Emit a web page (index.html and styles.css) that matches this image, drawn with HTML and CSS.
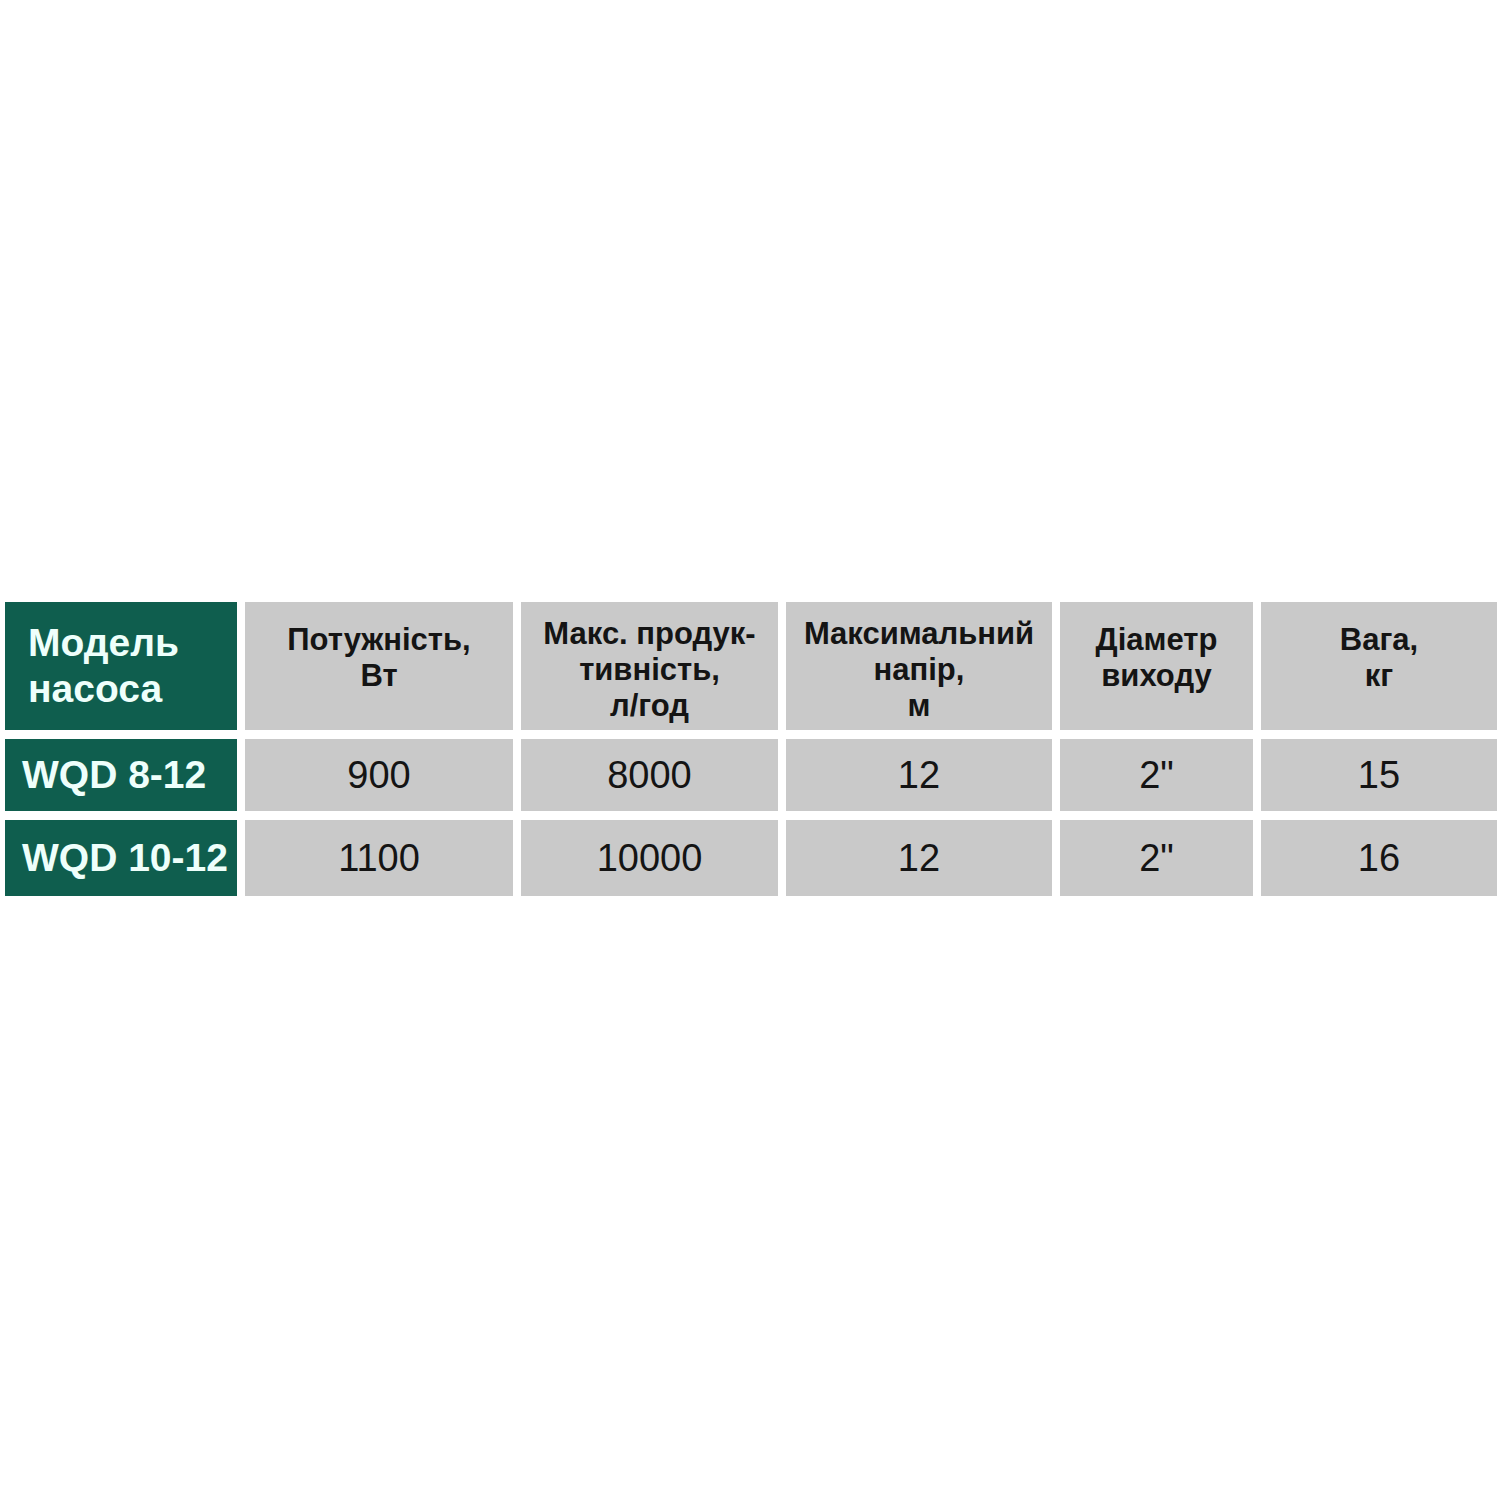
FILE: index.html
```html
<!DOCTYPE html>
<html lang="uk">
<head>
<meta charset="utf-8">
<title>Характеристики насосів WQD</title>
<link rel="stylesheet" href="styles.css">
</head>
<body>
<main class="page">
  <div class="spec">
    <div class="cell head model">Модель<br>насоса</div>
    <div class="cell head two">Потужність,<br>Вт</div>
    <div class="cell head">Макс. продук-<br>тивність,<br>л/год</div>
    <div class="cell head">Максимальний<br>напір,<br>м</div>
    <div class="cell head two">Діаметр<br>виходу</div>
    <div class="cell head two">Вага,<br>кг</div>

    <div class="cell name">WQD 8-12</div>
    <div class="cell val">900</div>
    <div class="cell val">8000</div>
    <div class="cell val">12</div>
    <div class="cell val">2"</div>
    <div class="cell val">15</div>

    <div class="cell name">WQD 10-12</div>
    <div class="cell val">1100</div>
    <div class="cell val">10000</div>
    <div class="cell val">12</div>
    <div class="cell val">2"</div>
    <div class="cell val">16</div>
  </div>
</main>
</body>
</html>
```

FILE: styles.css
```css
html, body {
  margin: 0;
  padding: 0;
  background: #ffffff;
}

.page {
  padding: 602px 0 0 5px;
  font-family: "Liberation Sans", Arial, sans-serif;
}

.spec {
  display: grid;
  grid-template-columns: 232px 268px 257px 266px 193px 236px;
  grid-template-rows: 128px 72px 76px;
  column-gap: 8px;
  row-gap: 9px;
}

.cell {
  background: #c9c9c9;
  color: #141414;
  box-sizing: border-box;
}

.head {
  font-weight: bold;
  font-size: 31px;
  line-height: 36px;
  text-align: center;
  padding-top: 14px;
  white-space: nowrap;
}

.head.two {
  padding-top: 20px;
}

.head.model {
  background: #0f5e4e;
  color: #eefffb;
  font-size: 39px;
  line-height: 46px;
  text-align: left;
  padding: 18px 0 0 23px;
}

.name {
  background: #0f5e4e;
  color: #eefffb;
  font-weight: bold;
  font-size: 39px;
  display: flex;
  align-items: center;
  padding-left: 17px;
  white-space: nowrap;
}

.val {
  font-size: 38px;
  display: flex;
  align-items: center;
  justify-content: center;
}
```
